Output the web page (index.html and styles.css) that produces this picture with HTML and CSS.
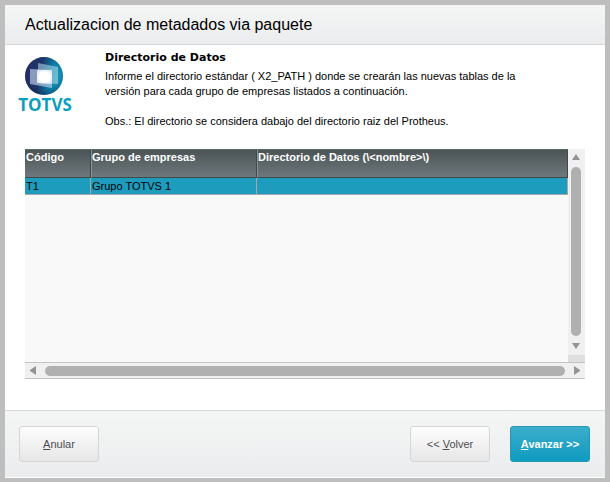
FILE: index.html
```html
<!DOCTYPE html>
<html lang="es">
<head>
  <meta charset="UTF-8">
  <title>Actualizacion de metadados via paquete</title>
  <link rel="stylesheet" href="styles.css">
</head>
<body>

<header class="title-bar">
  <h1>Actualizacion de metadados via paquete</h1>
</header>

<main class="content">
  <section class="intro">
    <svg class="logo" width="56" height="64" viewBox="0 0 56 64" role="img" aria-label="TOTVS">
      <defs>
        <linearGradient id="globe" x1="0" y1="0.3" x2="1" y2="0.5">
          <stop offset="0" stop-color="#29316a"/>
          <stop offset="0.4" stop-color="#1c3566"/>
          <stop offset="0.7" stop-color="#0c7da5"/>
          <stop offset="1" stop-color="#12a3c2"/>
        </linearGradient>
        <radialGradient id="shade" cx="0.5" cy="0.45" r="0.55">
          <stop offset="0.7" stop-color="#101c4c" stop-opacity="0"/>
          <stop offset="1" stop-color="#101c4c" stop-opacity="0.4"/>
        </radialGradient>
        <radialGradient id="glow" cx="0.5" cy="0.5" r="0.7">
          <stop offset="0.5" stop-color="#ffffff"/>
          <stop offset="1" stop-color="#c4dcee"/>
        </radialGradient>
      </defs>
      <circle cx="27" cy="20" r="19" fill="url(#globe)"/>
      <circle cx="27" cy="20" r="19" fill="url(#shade)"/>
      <path d="M21 7 L41 11 V28 L21 27 Z" fill="#b9dcec" fill-opacity="0.55"/>
      <path d="M13 13 L35 14 V32 L13 28 Z" fill="#c3d2e9" fill-opacity="0.65"/>
      <path d="M20 14 L35 14 V28 L20 27 Z" fill="url(#glow)"/>
      <text class="logo-text" x="28" y="55" text-anchor="middle">TOTVS</text>
    </svg>
    <div class="intro-text">
      <h2>Directorio de Datos</h2>
      <p>Informe el directorio estándar ( X2_PATH ) donde se crearán las nuevas tablas de la<br>
        versión para cada grupo de empresas listados a continuación.</p>
      <p>Obs.: El directorio se considera dabajo del directorio raiz del Protheus.</p>
    </div>
  </section>

  <section class="browse">
    <div class="browse-rows">
      <table>
        <thead>
          <tr>
            <th class="col-code">Código</th>
            <th class="col-group">Grupo de empresas</th>
            <th>Directorio de Datos (\&lt;nombre&gt;\)</th>
          </tr>
        </thead>
        <tbody>
          <tr>
            <td>T1</td>
            <td>Grupo TOTVS 1</td>
            <td></td>
          </tr>
        </tbody>
      </table>
    </div>
    <div class="scroll-v">
      <svg width="8" height="6" viewBox="0 0 8 6"><path d="M4 0 L8 6 H0 Z"/></svg>
      <div class="thumb"></div>
      <svg width="8" height="6" viewBox="0 0 8 6"><path d="M0 0 H8 L4 6 Z"/></svg>
    </div>
    <div class="scroll-h">
      <svg width="6" height="9" viewBox="0 0 6 9"><path d="M6 0 V9 L0 5 V4 Z"/></svg>
      <div class="thumb"></div>
      <svg width="6" height="9" viewBox="0 0 6 9"><path d="M0 0 V9 L6 5 V4 Z"/></svg>
    </div>
  </section>
</main>

<footer class="actions">
  <button type="button" class="cancel"><u>A</u>nular</button>
  <button type="button">&lt;&lt; <u>V</u>olver</button>
  <button type="button" class="primary"><u>A</u>vanzar &gt;&gt;</button>
</footer>

</body>
</html>
```
FILE: styles.css
```css
* {
  box-sizing: border-box;
}
body {
  display: flex;
  flex-direction: column;
  min-height: 100vh;
  margin: 0;
  border: 5px solid #bebebe;
  border-bottom-width: 4px;
  background: #fff;
  color: #000;
  font-family: "Liberation Sans", Arial, sans-serif;
  font-size: 11px;
  line-height: 15px;
}
h1, h2, p {
  margin: 0;
}

/* Title */
.title-bar {
  padding: 10px 20px 9px;
  border-bottom: 1px solid #d6d6d6;
  background: linear-gradient(#f4f6f5, #ebecee);
}
.title-bar h1 {
  font-size: 16px;
  font-weight: normal;
  line-height: 20px;
}

/* Description */
.content {
  flex: 1;
  display: flex;
  flex-direction: column;
  padding: 5px 20px 31px;
}
.intro {
  display: flex;
  gap: 32px;
  margin-left: -8px;
  padding-bottom: 20px;
}
.logo {
  flex: none;
  margin-top: 6px;
}
.logo-text {
  fill: #0a9fc0;
  font-family: "Open Sans", sans-serif;
  font-size: 17px;
  font-weight: bold;
}
.intro-text h2 {
  margin-bottom: 3px;
  font-family: "DejaVu Sans", Verdana, sans-serif;
  font-size: 11px;
  line-height: 16px;
}
.intro-text p + p {
  margin-top: 15px;
}

/* Grid */
.browse {
  flex: 1;
  display: grid;
  grid-template-columns: 1fr 17px;
  grid-template-rows: 1fr 17px;
}
.browse-rows {
  background: #f9f9f9;
}
table {
  width: 100%;
  table-layout: fixed;
  border-collapse: separate;
  border-spacing: 0;
}
.col-code {
  width: 66px;
}
.col-group {
  width: 166px;
}
th, td {
  padding: 0 1px;
  text-align: left;
  white-space: nowrap;
}
th {
  height: 29px;
  border-top: 1px solid #5f686b;
  border-right: 1px solid #40484a;
  border-bottom: 1px solid #40484a;
  background: linear-gradient(#4b5355, #6e797d);
  color: #fff;
  vertical-align: top;
}
th + th {
  border-left: 1px solid #8a9396;
  padding-left: 0;
}
td {
  height: 17px;
  border-right: 1px solid #a3a9ab;
  border-bottom: 1px solid #a3a9ab;
  background: #1e9cbe;
}

/* Scrollbars */
.scroll-v, .scroll-h {
  display: flex;
  align-items: center;
  background: #f0f0f0;
}
.scroll-v {
  flex-direction: column;
  gap: 7px;
  padding: 5px 1px 6px 0;
  border-bottom: 7px solid #dfdfdf;
}
.scroll-h {
  grid-column: 1 / -1;
  gap: 9px;
  padding: 0 5px;
  border-top: 1px solid #c3c3c3;
  border-bottom: 1px solid #c3c3c3;
}
.scroll-v svg, .scroll-h svg {
  flex: none;
  fill: #949494;
}
.thumb {
  flex: 1;
  border-radius: 5px;
  background: #b0b0b0;
}
.scroll-v .thumb {
  width: 10px;
}
.scroll-h .thumb {
  height: 10px;
}

/* Buttons */
.actions {
  display: flex;
  gap: 20px;
  padding: 15px 15px 15px 14px;
  border-top: 1px solid #d6d6d6;
  border-bottom: 1px solid #fff;
  background: linear-gradient(#f4f6f5, #ebecee);
}
button {
  width: 80px;
  height: 36px;
  padding: 0;
  border: 1px solid #d6d6d6;
  border-radius: 3px;
  background: linear-gradient(#fdfdfd, #e6e6e6);
  color: #4c4c52;
  font-family: inherit;
  font-size: 11px;
  cursor: pointer;
}
.cancel {
  margin-right: auto;
}
.primary {
  border-color: #2698b5;
  background: linear-gradient(#3badcb, #0f9bc0);
  color: #fff;
  font-weight: bold;
}
```
